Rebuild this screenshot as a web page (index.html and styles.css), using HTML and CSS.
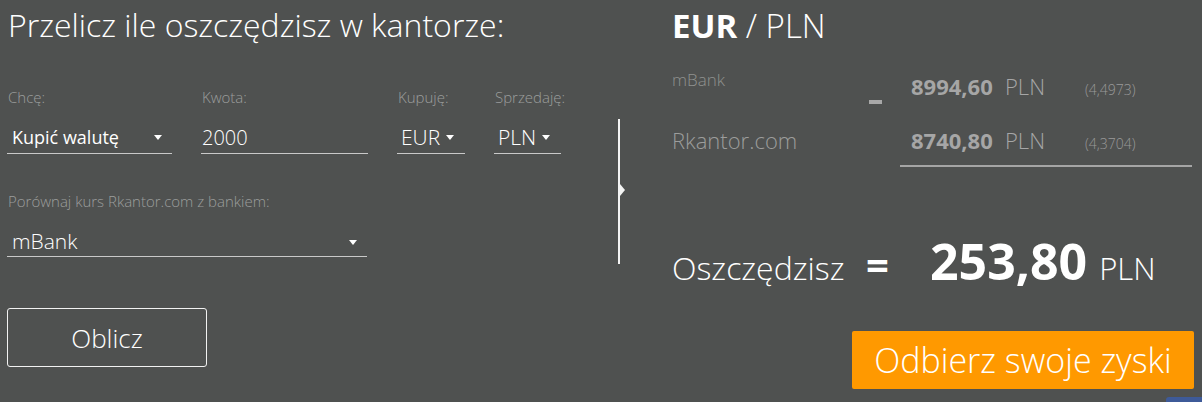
FILE: index.html
```html
<!DOCTYPE html>
<html lang="pl">
<head>
  <meta charset="UTF-8">
  <title>Kalkulator kantoru</title>
  <link rel="stylesheet" href="styles.css">
</head>
<body>
  <div class="calc">
    <div class="calc-form">
      <h1 class="calc-title">Przelicz ile oszczędzisz w kantorze:</h1>

      <div class="form-row">
        <div class="field">
          <div class="field-label">Chcę:</div>
          <div class="field-select">Kupić walutę <span class="caret"></span></div>
        </div>
        <div class="field">
          <div class="field-label">Kwota:</div>
          <div class="field-input">2000</div>
        </div>
        <div class="field">
          <div class="field-label">Kupuję:</div>
          <div class="field-select field-select--short">EUR <span class="caret"></span></div>
        </div>
        <div class="field">
          <div class="field-label">Sprzedaję:</div>
          <div class="field-select field-select--short">PLN <span class="caret"></span></div>
        </div>
      </div>

      <div class="field field--bank">
        <div class="field-label">Porównaj kurs Rkantor.com z bankiem:</div>
        <div class="field-select field-select--bank">mBank <span class="caret"></span></div>
      </div>

      <button class="btn-outline">Oblicz</button>
    </div>

    <div class="divider"><span class="divider-arrow"></span></div>

    <div class="calc-result">
      <h2 class="pair"><b>EUR</b> / PLN</h2>

      <div class="compare">
        <div class="compare-name compare-name--bank">mBank</div>
        <div class="compare-sign"><span class="minus"></span></div>
        <div class="compare-value">
          <span class="amount">8994,60</span><span class="cur">PLN</span><span class="rate">(4,4973)</span>
        </div>
        <div class="compare-name compare-name--kantor">Rkantor.com</div>
        <div class="compare-value compare-value--last">
          <span class="amount">8740,80</span><span class="cur">PLN</span><span class="rate">(4,3704)</span>
        </div>
      </div>

      <div class="saving">
        <span class="saving-label">Oszczędzisz</span>
        <span class="saving-eq">=</span>
        <span class="saving-amount">253,80</span>
        <span class="saving-cur">PLN</span>
      </div>

      <div class="cta-row">
        <button class="btn-cta">Odbierz swoje zyski</button>
      </div>
    </div>
  </div>
  <div class="corner-tab"></div>
</body>
</html>
```

FILE: styles.css
```css
html, body {
  margin: 0;
  height: 100%;
}

body {
  background: #4f5150;
  color: #fff;
  font-family: "Open Sans", "Noto Sans", sans-serif;
  font-weight: 300;
  overflow: hidden;
  position: relative;
}

.calc {
  display: flex;
  align-items: flex-start;
}

/* lewa kolumna */
.calc-form {
  width: 618px;
  padding-left: 7px;
  box-sizing: border-box;
}

.calc-title {
  margin: 5px 0 0 1px;
  font-size: 32px;
  font-weight: 300;
  line-height: 40px;
}

.form-row {
  display: grid;
  grid-template-columns: 165px 167px 68px 67px;
  column-gap: 29px;
  margin-top: 43px;
}

.field-label {
  font-size: 15px;
  line-height: 18px;
  color: #9c9e9d;
  padding-left: 1px;
  white-space: nowrap;
}

.field-select,
.field-input {
  position: relative;
  height: 34px;
  margin-top: 13px;
  font-size: 18px;
  font-weight: 400;
  line-height: 37px;
  border-bottom: 1px solid #c9c9c9;
  padding-left: 5px;
  white-space: nowrap;
}

.field-input {
  padding-left: 1px;
  font-size: 20px;
  font-weight: 300;
}

.field-select--short {
  padding-left: 4px;
  font-size: 21px;
  font-weight: 300;
}

.caret {
  position: absolute;
  right: 10px;
  top: 16px;
  border-left: 4px solid transparent;
  border-right: 4px solid transparent;
  border-top: 5px solid #fff;
}

.field-select--short .caret {
  position: static;
  display: inline-block;
  vertical-align: middle;
  margin-left: 0;
  margin-top: -3px;
}

.field--bank {
  margin-top: 38px;
  width: 360px;
}

.field--bank .field-select {
  margin-top: 14px;
  height: 32px;
  line-height: 35px;
  font-size: 21px;
  font-weight: 300;
}

.field--bank .caret {
  top: 16px;
}

.btn-outline {
  display: block;
  margin-top: 51px;
  width: 200px;
  height: 59px;
  background: transparent;
  border: 1px solid #f2f2f2;
  border-radius: 3px;
  color: #fff;
  font-family: inherit;
  font-weight: 300;
  font-size: 26px;
  cursor: pointer;
}

/* separator */
.divider {
  position: relative;
  width: 2px;
  height: 145px;
  margin-top: 119px;
  background: #f4f4f4;
}

.divider-arrow {
  position: absolute;
  left: 2px;
  top: 65px;
  border-top: 6px solid transparent;
  border-bottom: 6px solid transparent;
  border-left: 5px solid #f4f4f4;
}

/* prawa kolumna */
.calc-result {
  margin-left: 52px;
  width: 522px;
}

.pair {
  margin: 5px 0 0;
  font-size: 33px;
  font-weight: 300;
  line-height: 42px;
}

.pair b {
  font-weight: 700;
}

.compare {
  display: grid;
  grid-template-columns: 188px 40px 292px;
  margin-top: 19px;
}

.compare-name {
  font-size: 22px;
  color: #9c9d9c;
  line-height: 40px;
}

.compare-name--bank {
  font-size: 17px;
  line-height: 28px;
  color: #8f918f;
}

.compare-name--kantor {
  margin-top: 10px;
}

.compare-sign {
  grid-row: span 2;
}

.minus {
  display: block;
  width: 13px;
  height: 4px;
  margin: 34px 0 0 9px;
  background: #a8a8a8;
}

.compare-value {
  padding-left: 11px;
  line-height: 40px;
  color: #a6a6a6;
  white-space: nowrap;
}

.compare-value--last {
  border-bottom: 2px solid #a5a5a5;
  padding-bottom: 1px;
  margin-top: 10px;
}

.amount {
  display: inline-block;
  width: 94px;
  font-size: 22px;
  font-weight: 700;
}

.cur {
  display: inline-block;
  width: 80px;
  font-size: 22px;
}

.rate {
  font-size: 14px;
  color: #9a9a9a;
}

.saving {
  display: flex;
  align-items: baseline;
  margin-top: 64px;
  line-height: 60px;
}

.saving-label {
  font-size: 32px;
  width: 194px;
}

.saving-eq {
  font-size: 40px;
  font-weight: 700;
  width: 64px;
}

.saving-amount {
  font-size: 50px;
  font-weight: 700;
  margin-right: 12px;
}

.saving-cur {
  font-size: 31px;
}

.cta-row {
  display: flex;
  justify-content: flex-end;
  margin-top: 33px;
}

.btn-cta {
  width: 342px;
  height: 58px;
  background: #ff9900;
  border: 0;
  border-radius: 2px;
  color: #fff;
  font-family: inherit;
  font-weight: 300;
  font-size: 34px;
  cursor: pointer;
}

.corner-tab {
  position: absolute;
  right: 0;
  bottom: 0;
  width: 36px;
  height: 5px;
  background: #3e5a98;
  border-radius: 3px 0 0 0;
}
```
